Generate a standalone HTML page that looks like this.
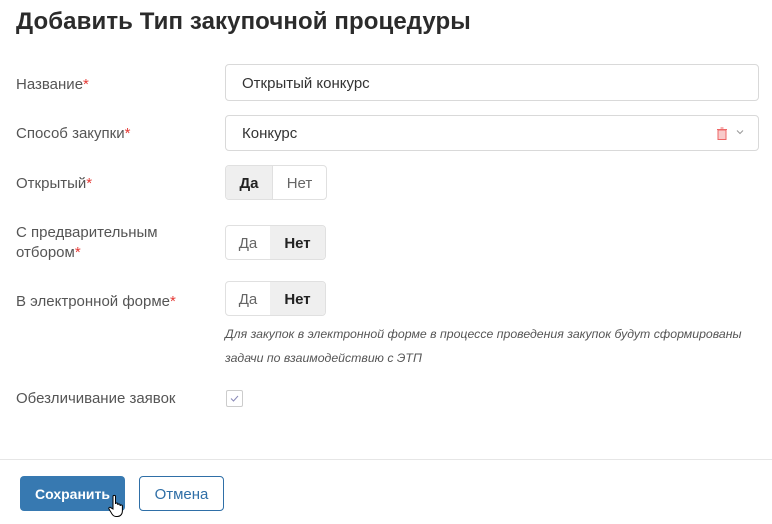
<!DOCTYPE html>
<html><head><meta charset="utf-8"><style>
body{margin:0;width:772px;height:524px;background:#fff;font-family:"Liberation Sans",sans-serif;position:relative;overflow:hidden;color:#333}
.a{position:absolute}
.t{left:16px;top:8px;font-size:24px;color:#2b2b2b;font-weight:bold;letter-spacing:0.1px}
.l{left:16px;font-size:15px;color:#555;line-height:20px}
.l b{color:#e53935;font-weight:normal}
.in{left:225px;width:532px;height:35px;border:1px solid #d9d9d9;border-radius:4px;font-size:15px;color:#333;line-height:37px;box-sizing:content-box}
.in span{margin-left:16px}
.tg{left:225px;height:33px;border:1px solid #e0e0e0;border-radius:4px;display:flex;font-size:15px;line-height:35px;overflow:hidden}
.tg div{text-align:center;color:#666}
.tg .on{background:#efefef;color:#222;font-weight:bold}
</style></head><body>
<div class="a t">Добавить Тип закупочной процедуры</div>

<div class="a l" style="top:75px">Название<b>*</b></div>
<div class="a in" style="top:64px"><span>Открытый конкурс</span></div>

<div class="a l" style="top:124px">Способ закупки<b>*</b></div>
<div class="a in" style="top:115px;height:34px;line-height:35px"><span>Конкурс</span>
<svg class="a" style="left:490px;top:11px" width="12" height="13" viewBox="0 0 12 13"><rect x="2" y="3" width="8" height="9.5" fill="#f8caca" stroke="#e66" stroke-width="1"/><line x1="1" y1="2.5" x2="11" y2="2.5" stroke="#e66"/><line x1="4.5" y1="1" x2="7.5" y2="1" stroke="#e66"/></svg>
<svg class="a" style="left:510px;top:13px" width="8" height="6" viewBox="0 0 8 6"><path d="M1 1.5L4 4.5L7 1.5" fill="none" stroke="#999" stroke-width="1"/></svg>
</div>

<div class="a l" style="top:174px">Открытый<b>*</b></div>
<div class="a tg" style="top:165px"><div class="on" style="width:46px">Да</div><div style="width:53px;border-left:1px solid #e0e0e0">Нет</div></div>

<div class="a l" style="top:223px">С предварительным<br>отбором<b>*</b></div>
<div class="a tg" style="top:225px"><div style="width:44px">Да</div><div class="on" style="width:55px">Нет</div></div>

<div class="a l" style="top:292px">В электронной форме<b>*</b></div>
<div class="a tg" style="top:281px"><div style="width:44px">Да</div><div class="on" style="width:55px">Нет</div></div>

<div class="a" style="left:225px;top:322px;font-size:12.3px;font-style:italic;color:#555;line-height:24px">Для закупок в электронной форме в процессе проведения закупок будут сформированы<br>задачи по взаимодействию с ЭТП</div>

<div class="a l" style="top:389px">Обезличивание заявок</div>
<div class="a" style="left:226px;top:390px;width:15px;height:15px;border:1px solid #ccc;border-radius:2px"><svg width="15" height="15" viewBox="0 0 15 15"><path d="M4 7.5L6.5 10L11 5" fill="none" stroke="#8a8ab8" stroke-width="1"/></svg></div>

<div class="a" style="left:0;top:459px;width:772px;height:1px;background:#e6e6e6"></div>
<div class="a" style="left:20px;top:476px;width:105px;height:35px;background:#3779b1;border-radius:4px;color:#fff;font-size:14px;font-weight:bold;text-align:center;line-height:36px">Сохранить</div>
<div class="a" style="left:139px;top:476px;width:83px;height:33px;border:1px solid #2f6fa7;border-radius:4px;color:#2f6fa7;font-size:15px;text-align:center;line-height:35px">Отмена</div>
<svg class="a" style="left:108px;top:494px" width="18" height="24" viewBox="0 0 18 24"><path d="M5 2.5c0-1.5 2.5-1.5 2.5 0V10c0-1.3 2.3-1.3 2.3 0v1c0-1.3 2.300-1.3 2.3 0v1c0-1.3 2.3-1.3 2.3 0v5c0 3-2 5.5-5 5.5H8c-2 0-3-1-4-2.5l-3-5c-.8-1.3 1-2.300 2-1.2L5 15z" fill="#fff" stroke="#000" stroke-width="1"/></svg>
</body></html>
